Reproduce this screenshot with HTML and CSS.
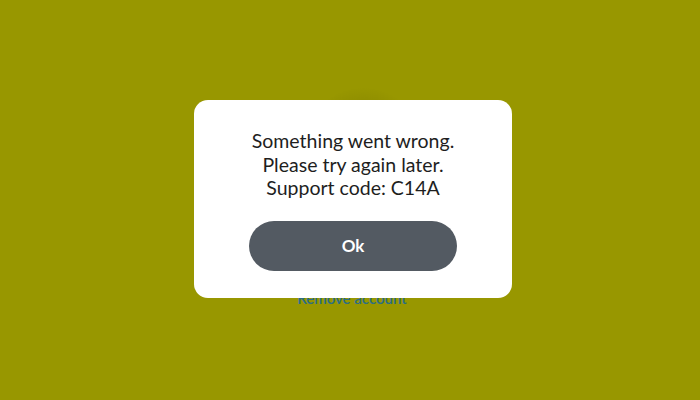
FILE: index.html
```html
<!DOCTYPE html>
<html lang="en">
<head>
<meta charset="utf-8">
<title>Account</title>
<link rel="stylesheet" href="styles.css">
</head>
<body>
  <main class="screen">
    <div class="avatar"></div>
    <a class="remove-link" href="#">Remove account</a>
  </main>

  <div class="overlay">
    <div class="dialog" role="alertdialog">
      <p class="message">Something went wrong.<br>Please try again later.<br>Support code: C14A</p>
      <button class="ok-btn" type="button">Ok</button>
    </div>
  </div>
</body>
</html>
```
FILE: styles.css
```css
html, body {
  margin: 0;
  height: 100%;
}

body {
  background: #989700;
  font-family: Lato, "Open Sans", sans-serif;
  overflow: hidden;
}

.screen {
  height: 400px;
  display: flex;
  flex-direction: column;
  align-items: center;
  padding-top: 88px;
  box-sizing: border-box;
}

.avatar {
  width: 120px;
  height: 120px;
  border-radius: 50%;
  margin-left: 26px;
  background: radial-gradient(circle, rgba(0,0,0,0.05) 55%, rgba(0,0,0,0) 72%);
}

.remove-link {
  margin-top: 81px;
  margin-left: 4px;
  color: #2b6e86;
  font-size: 15px;
  font-weight: 600;
  text-decoration: none;
}

.overlay {
  position: fixed;
  inset: 0;
  display: flex;
  align-items: center;
  justify-content: center;
}

.dialog {
  width: 318px;
  height: 198px;
  margin-left: 6px;
  margin-top: -2px;
  box-sizing: border-box;
  background: #ffffff;
  border-radius: 14px;
  display: flex;
  flex-direction: column;
  align-items: center;
  padding-top: 29px;
}

.message {
  margin: 0;
  color: #1e1e1e;
  font-size: 19.5px;
  line-height: 23.5px;
  text-align: center;
}

.ok-btn {
  margin-top: 21px;
  width: 208px;
  height: 50px;
  border: none;
  border-radius: 25px;
  background: #535a62;
  color: #ffffff;
  font-family: inherit;
  font-size: 17px;
  font-weight: 700;
}
```
